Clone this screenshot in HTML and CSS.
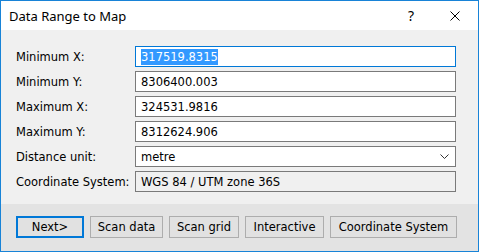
FILE: index.html
```html
<!DOCTYPE html>
<html>
<head>
<meta charset="utf-8">
<link rel="stylesheet" href="styles.css">
</head>
<body>
<div class="window">
  <div class="titlebar">
    <span class="title">Data Range to Map</span>
    <span class="help">?</span>
    <span class="close">
      <svg width="10" height="10" viewBox="0 0 10 10"><path d="M0.5 0.5 L9.5 9.5 M9.5 0.5 L0.5 9.5" stroke="#000" stroke-width="1" fill="none"/></svg>
    </span>
  </div>
  <div class="content">
    <div class="form">
      <label class="lbl">Minimum X:</label>
      <div class="field focused"><span class="sel">317519.8315</span></div>
      <label class="lbl">Minimum Y:</label>
      <div class="field">8306400.003</div>
      <label class="lbl">Maximum X:</label>
      <div class="field">324531.9816</div>
      <label class="lbl">Maximum Y:</label>
      <div class="field">8312624.906</div>
      <label class="lbl">Distance unit:</label>
      <div class="field combo"><span>metre</span>
        <svg class="chev" width="9" height="5" viewBox="0 0 9 5"><path d="M0.5 0.5 L4.5 4.5 L8.5 0.5" stroke="#333" stroke-width="1" fill="none"/></svg>
      </div>
      <label class="lbl">Coordinate System:</label>
      <div class="field readonly">WGS 84 / UTM zone 36S</div>
    </div>
  </div>
  <div class="footer">
    <button class="btn default w-next">Next&gt;</button>
    <button class="btn w-scan">Scan data</button>
    <button class="btn w-grid">Scan grid</button>
    <button class="btn w-inter">Interactive</button>
    <button class="btn w-coord">Coordinate System</button>
  </div>
</div>
</body>
</html>
```

FILE: styles.css
```css
html, body {
  margin: 0;
  padding: 0;
  background: #ffffff;
}
.window {
  width: 479px;
  height: 252px;
  box-sizing: border-box;
  border: 1px solid #1883d7;
  background: #f0f0f0;
  display: flex;
  flex-direction: column;
  font-family: "DejaVu Sans", sans-serif;
  font-size: 11.5px;
  color: #000;
}
.titlebar {
  height: 29px;
  background: #ffffff;
  display: flex;
  align-items: center;
  font-family: "Noto Sans", "Open Sans", sans-serif;
  font-size: 13px;
}
.title {
  margin-left: 8px;
  flex: 1;
}
.help {
  width: 16px;
  text-align: center;
  margin-right: 31px;
  font-size: 14px;
}
.close {
  width: 10px;
  height: 10px;
  margin-right: 18px;
  display: flex;
}
.content {
  padding: 16px 22px 12px 15px;
  flex: 1;
}
.form {
  display: grid;
  grid-template-columns: 119px 321px;
  grid-auto-rows: 21px;
  row-gap: 4px;
  align-items: center;
}
.lbl {
  color: #000;
  white-space: nowrap;
}
.field {
  height: 21px;
  box-sizing: border-box;
  border: 1px solid #7a7a7a;
  background: #fff;
  display: flex;
  align-items: center;
  padding-left: 5px;
  white-space: nowrap;
}
.field.focused {
  border-color: #0078d7;
}
.sel {
  background: #3399ff;
  color: #fff;
  padding: 1px 0;
}
.combo {
  justify-content: space-between;
  padding-right: 6px;
}
.readonly {
  background: #f0f0f0;
}
.footer {
  height: 47px;
  box-sizing: border-box;
  background: #e3e3e3;
  display: flex;
  align-items: flex-start;
  gap: 6px;
  padding: 12px 0 0 15px;
}
.btn {
  height: 22px;
  box-sizing: border-box;
  border: 1px solid #adadad;
  background: #e1e1e1;
  font-family: "DejaVu Sans", sans-serif;
  font-size: 11.5px;
  color: #000;
  padding: 0;
  margin: 0;
}
.btn.default {
  border: 2px solid #0078d7;
}
.w-next { width: 68px; }
.w-scan { width: 73px; }
.w-grid { width: 70px; }
.w-inter { width: 79px; }
.w-coord { width: 127px; }
```
